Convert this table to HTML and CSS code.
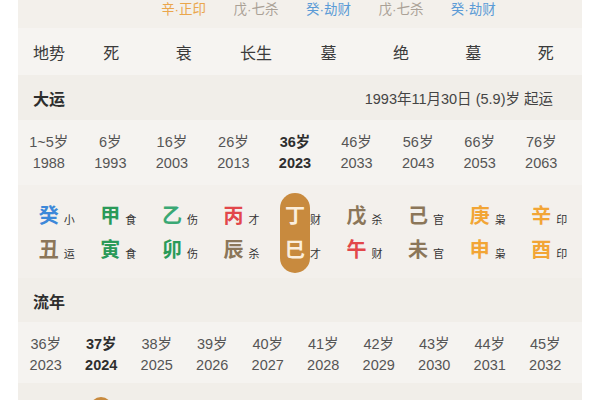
FILE: index.html
```html
<!DOCTYPE html>
<html lang="zh">
<head>
<meta charset="utf-8">
<link rel="stylesheet" href="styles.css">
</head>
<body>
<div class="card">
  <div class="row top grid8">
    <div></div><div></div>
    <div class="cell orange">辛·正印</div>
    <div class="cell tan">戊·七杀</div>
    <div class="cell blue">癸·劫财</div>
    <div class="cell tan">戊·七杀</div>
    <div class="cell blue">癸·劫财</div>
    <div></div>
  </div>
  <div class="row dishi grid8">
    <div class="label">地势</div>
    <div class="cell">死</div>
    <div class="cell">衰</div>
    <div class="cell">长生</div>
    <div class="cell">墓</div>
    <div class="cell">绝</div>
    <div class="cell">墓</div>
    <div class="cell">死</div>
  </div>
  <div class="head">
    <span class="title">大运</span>
    <span class="sub">1993年11月30日 (5.9)岁 起运</span>
  </div>
  <div class="ages grid9">
    <div class="age"><span>1~5岁</span><span>1988</span></div>
    <div class="age"><span>6岁</span><span>1993</span></div>
    <div class="age"><span>16岁</span><span>2003</span></div>
    <div class="age"><span>26岁</span><span>2013</span></div>
    <div class="age cur"><span>36岁</span><span>2023</span></div>
    <div class="age"><span>46岁</span><span>2033</span></div>
    <div class="age"><span>56岁</span><span>2043</span></div>
    <div class="age"><span>66岁</span><span>2053</span></div>
    <div class="age"><span>76岁</span><span>2063</span></div>
  </div>
  <div class="gz grid9">
    <div class="gzc"><div class="big"><span class="blue2">癸</span><span class="brown">丑</span></div><div class="small"><span>小</span><span>运</span></div></div>
    <div class="gzc"><div class="big"><span class="green">甲</span><span class="green">寅</span></div><div class="small"><span>食</span><span>食</span></div></div>
    <div class="gzc"><div class="big"><span class="green2">乙</span><span class="green">卯</span></div><div class="small"><span>伤</span><span>伤</span></div></div>
    <div class="gzc"><div class="big"><span class="red">丙</span><span class="brown">辰</span></div><div class="small"><span>才</span><span>杀</span></div></div>
    <div class="gzc"><div class="big pill"><span>丁</span><span>巳</span></div><div class="small"><span>财</span><span>才</span></div></div>
    <div class="gzc"><div class="big"><span class="brown">戊</span><span class="red">午</span></div><div class="small"><span>杀</span><span>财</span></div></div>
    <div class="gzc"><div class="big"><span class="brown">己</span><span class="brown">未</span></div><div class="small"><span>官</span><span>官</span></div></div>
    <div class="gzc"><div class="big"><span class="gold">庚</span><span class="gold">申</span></div><div class="small"><span>枭</span><span>枭</span></div></div>
    <div class="gzc"><div class="big"><span class="gold">辛</span><span class="gold">酉</span></div><div class="small"><span>印</span><span>印</span></div></div>
  </div>
  <div class="head ln">
    <span class="title">流年</span>
  </div>
  <div class="ages lnages grid10">
    <div class="age"><span>36岁</span><span>2023</span></div>
    <div class="age cur"><span>37岁</span><span>2024</span></div>
    <div class="age"><span>38岁</span><span>2025</span></div>
    <div class="age"><span>39岁</span><span>2026</span></div>
    <div class="age"><span>40岁</span><span>2027</span></div>
    <div class="age"><span>41岁</span><span>2028</span></div>
    <div class="age"><span>42岁</span><span>2029</span></div>
    <div class="age"><span>43岁</span><span>2030</span></div>
    <div class="age"><span>44岁</span><span>2031</span></div>
    <div class="age"><span>45岁</span><span>2032</span></div>
  </div>
  <div class="lngz grid10">
    <div></div>
    <div class="lnpill"></div>
  </div>
</div>
</body>
</html>
```
FILE: styles.css
```css
html, body {
  margin: 0;
  padding: 0;
  background: #ffffff;
  height: 400px;
  overflow: hidden;
}
body {
  font-family: "Liberation Sans", "Noto Sans CJK SC", sans-serif;
  color: #333;
}
.card {
  margin: 0 18px;
  background: #f3f0ec;
}
.grid8 {
  display: grid;
  grid-template-columns: 57px repeat(7, 1fr);
}
.grid9 {
  display: grid;
  grid-template-columns: repeat(9, 1fr);
  padding-right: 10px;
}
.grid10 {
  display: grid;
  grid-template-columns: repeat(10, 1fr);
  padding-right: 9px;
}
.cell {
  text-align: center;
  white-space: nowrap;
}
.top {
  height: 28px;
  font-size: 13.5px;
  line-height: 16px;
  padding-top: 2px;
  box-sizing: border-box;
  background: #f3f0eb;
}
.orange { color: #eaa64c; }
.tan { color: #aaa196; }
.blue { color: #5b9bd6; }
.dishi {
  height: 47px;
  align-items: center;
  font-size: 16px;
  background: #f6f4f1;
  color: #3a3a3a;
}
.label {
  padding-left: 15px;
}
.head {
  height: 45px;
  display: flex;
  align-items: center;
  justify-content: space-between;
  padding: 0 29px 0 15px;
  background: #f1eee9;
}
.head.ln {
  height: 44px;
  padding-top: 2px;
  box-sizing: border-box;
}
.title {
  font-size: 16px;
  font-weight: bold;
  color: #2e2e2e;
}
.sub {
  font-size: 14.5px;
  color: #444;
}
.ages {
  height: 65px;
  align-items: center;
  background: #f5f3f0;
  font-size: 14.5px;
}
.lnages {
  height: 61px;
  padding-top: 4px;
  box-sizing: border-box;
}
.age {
  display: flex;
  flex-direction: column;
  align-items: center;
  line-height: 21px;
  color: #555;
  white-space: nowrap;
}
.age.cur {
  color: #2e2e2e;
  font-weight: bold;
}
.gz {
  height: 93px;
  padding-top: 8px;
  box-sizing: border-box;
  background: #f3f0ec;
  align-items: start;
}
.gzc {
  display: flex;
  justify-content: center;
  padding-left: 12px;
}
.big {
  display: flex;
  flex-direction: column;
  align-items: center;
  width: 30px;
  padding: 6px 0;
  font-size: 20px;
  font-weight: bold;
  line-height: 34px;
}
.small {
  display: flex;
  flex-direction: column;
  width: 12px;
  padding-top: 10px;
  font-size: 11px;
  line-height: 34px;
  color: #333;
}
.pill {
  background: #c88a3e;
  color: #fbeedd;
  border-radius: 15px;
}
.blue2 { color: #3c88d9; }
.green { color: #2a9a58; }
.green2 { color: #3aa874; }
.red { color: #e2474a; }
.brown { color: #8b7659; }
.gold { color: #f2a535; }
.lngz {
  height: 40px;
  background: #f1eee9;
}
.lnpill {
  justify-self: center;
  width: 22px;
  height: 40px;
  margin-top: 14px;
  background: #c88a3e;
  border-radius: 11px;
}
```
